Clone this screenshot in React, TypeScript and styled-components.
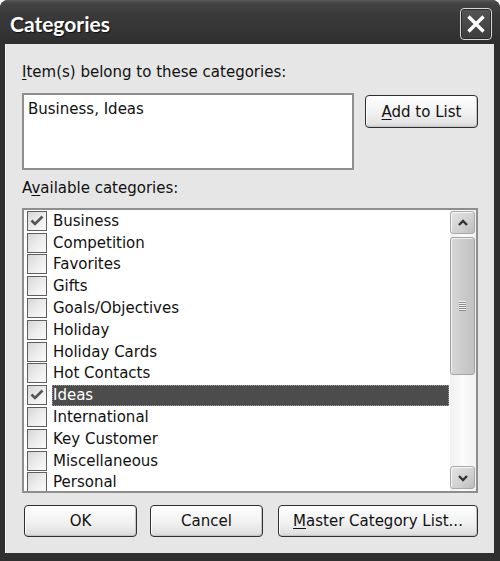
import React from "react";
import styled, { createGlobalStyle } from "styled-components";

const Global = createGlobalStyle`
  html, body { margin: 0; padding: 0; background: #ffffff; }
  body { font-family: "DejaVu Sans", "Liberation Sans", sans-serif; }
  * { box-sizing: border-box; }
`;

const Window = styled.div`
  width: 500px;
  height: 561px;
  display: flex;
  flex-direction: column;
  background: #2f2f2f;
  border-radius: 8px 8px 0 0;
  overflow: hidden;
`;

const TitleBar = styled.div`
  height: 44px;
  flex: none;
  display: flex;
  align-items: flex-start;
  justify-content: space-between;
  padding: 0 8px 0 10px;
  background: linear-gradient(#5a5a5a 0px, #444 3px, #3a3a3a 14px, #353535 30px, #2e2e2e 44px);
`;

const Title = styled.div`
  margin-top: 11px;
  font-family: Lato, "Liberation Sans", sans-serif;
  font-weight: 700;
  font-size: 21px;
  line-height: 26px;
  color: #ffffff;
  text-shadow: 1px 1px 1px #111;
`;

const CloseButton = styled.div`
  margin-top: 8px;
  width: 32px;
  height: 32px;
  border: 1.5px solid #d8d8d8;
  border-radius: 4px;
  background: linear-gradient(#555, #3c3c3c);
  box-shadow: inset 0 0 0 1px #2a2a2a;
  display: flex;
  align-items: center;
  justify-content: center;
`;

const Body = styled.div`
  flex: 1;
  margin: 0 6px 8px 5px;
  background: #e6e6e6;
  padding: 19px 16px 16px 17px;
  display: flex;
  flex-direction: column;
  color: #111;
  font-size: 15px;
  line-height: 18px;
  box-shadow: inset 1px 0 0 #f4f4f4;
`;

const Label = styled.div<{ $gap: number }>`
  margin-bottom: ${(p) => p.$gap}px;
`;

const Mn = styled.span`
  text-decoration: underline;
  text-underline-offset: 2px;
`;

const TopRow = styled.div`
  display: flex;
  align-items: flex-start;
  gap: 11px;
  margin-bottom: 9px;
`;

const TextBox = styled.div`
  width: 332px;
  height: 77px;
  flex: none;
  background: #fff;
  border: 2px solid #8e8e8e;
  padding: 5px 4px;
`;

const PushButton = styled.div<{ $w: number; $ml?: number }>`
  width: ${(p) => p.$w}px;
  flex: none;
  margin-left: ${(p) => p.$ml ?? 0}px;
  height: 32px;
  border: 1.5px solid #2f2f2f;
  border-radius: 4px;
  background: linear-gradient(#ffffff, #f1f1f1 55%, #e2e2e2 90%, #d2d2d2);
  box-shadow: inset 1px 1px 0 #fff, inset -1px -1px 0 #c4c4c4;
  display: flex;
  align-items: center;
  justify-content: center;
  color: #111;
`;

const AddButton = styled(PushButton)`
  margin-top: 2px;
  height: 33px;
`;

const ListBox = styled.div`
  height: 285px;
  background: #fff;
  border: 2px solid #8e8e8e;
  display: flex;
  margin-bottom: 12px;
`;

const Items = styled.div`
  flex: 1;
  min-width: 0;
  overflow: hidden;
  padding: 0 1px 0 3px;
`;

const Row = styled.div`
  height: 21.8px;
  display: flex;
  align-items: center;
  gap: 5px;
`;

const Check = styled.div`
  width: 20px;
  height: 20px;
  flex: none;
  border: 1.5px solid #5e5e5e;
  background: linear-gradient(135deg, #d6d6d6, #ececec 50%, #fbfbfb);
  display: flex;
  align-items: center;
  justify-content: center;
`;

const ItemText = styled.div<{ $sel: boolean }>`
  flex: 1;
  height: 21px;
  padding: 1.5px 1px 0 1px;
  line-height: 18px;
  color: ${(p) => (p.$sel ? "#fff" : "#111")};
  background: ${(p) => (p.$sel ? "#4c4c4c" : "transparent")};
  outline: ${(p) => (p.$sel ? "1px dotted #9a9a9a" : "none")};
  outline-offset: -1px;
  white-space: nowrap;
`;

const ScrollBar = styled.div`
  width: 26px;
  flex: none;
  padding: 1px 1px 2px 0;
  background: linear-gradient(90deg, #f0f0f0, #fbfbfb 50%, #f2f2f2);
  display: flex;
  flex-direction: column;
`;

const ScrollBtn = styled.div`
  height: 23px;
  border: 1px solid #a9a9a9;
  border-radius: 3px;
  background: linear-gradient(135deg, #e4e4e4, #d0d0d0 60%, #bdbdbd);
  box-shadow: inset 1px 1px 0 #f6f6f6;
  display: flex;
  align-items: center;
  justify-content: center;
`;

const Thumb = styled.div`
  margin-top: 3px;
  height: 138px;
  border: 1px solid #a3a3a3;
  border-radius: 3px;
  background: linear-gradient(90deg, #d8d8d8, #cbcbcb 50%, #c2c2c2);
  box-shadow: inset 1px 1px 0 #efefef;
  display: flex;
  align-items: center;
  justify-content: center;
`;

const Spacer = styled.div`
  flex: 1;
`;

const ButtonRow = styled.div`
  display: flex;
  padding-left: 2px;
`;

const items: { name: string; checked?: boolean; selected?: boolean }[] = [
  { name: "Business", checked: true },
  { name: "Competition" },
  { name: "Favorites" },
  { name: "Gifts" },
  { name: "Goals/Objectives" },
  { name: "Holiday" },
  { name: "Holiday Cards" },
  { name: "Hot Contacts" },
  { name: "Ideas", checked: true, selected: true },
  { name: "International" },
  { name: "Key Customer" },
  { name: "Miscellaneous" },
  { name: "Personal" },
];

const CheckMark = () => (
  <svg width="16" height="16" viewBox="0 0 16 16">
    <path d="M2.5 7.5 L6 11 L13.5 3.5" fill="none" stroke="#555" strokeWidth="2.6" />
  </svg>
);

const Chevron = ({ up }: { up: boolean }) => (
  <svg width="12" height="10" viewBox="0 0 12 10">
    <path
      d={up ? "M2 7 L6 3 L10 7" : "M2 3 L6 7 L10 3"}
      fill="none"
      stroke="#333"
      strokeWidth="2.4"
    />
  </svg>
);

const Grip = () => (
  <svg width="9" height="10" viewBox="0 0 9 10">
    {[0, 2, 4, 6, 8].map((y) => (
      <g key={y}>
        <line x1="1" x2="8" y1={y + 0.5} y2={y + 0.5} stroke="#f2f2f2" strokeWidth="1" />
        <line x1="1" x2="8" y1={y + 1.5} y2={y + 1.5} stroke="#8c8c8c" strokeWidth="1" />
      </g>
    ))}
  </svg>
);

export default function App() {
  return (
    <>
      <Global />
      <Window>
        <TitleBar>
          <Title>Categories</Title>
          <CloseButton>
            <svg width="20" height="20" viewBox="0 0 20 20">
              <path d="M2.5 2.5 L17.5 17.5 M17.5 2.5 L2.5 17.5" stroke="#fff" strokeWidth="3.4" />
            </svg>
          </CloseButton>
        </TitleBar>
        <Body>
          <Label $gap={12}>
            <Mn>I</Mn>tem(s) belong to these categories:
          </Label>
          <TopRow>
            <TextBox>Business, Ideas</TextBox>
            <AddButton $w={113}>
              <span>
                <Mn>A</Mn>dd to List
              </span>
            </AddButton>
          </TopRow>
          <Label $gap={11}>
            A<Mn>v</Mn>ailable categories:
          </Label>
          <ListBox>
            <Items>
              {items.map((it) => (
                <Row key={it.name}>
                  <Check>{it.checked && <CheckMark />}</Check>
                  <ItemText $sel={!!it.selected}>{it.name}</ItemText>
                </Row>
              ))}
            </Items>
            <ScrollBar>
              <ScrollBtn>
                <Chevron up />
              </ScrollBtn>
              <Thumb>
                <Grip />
              </Thumb>
              <Spacer />
              <ScrollBtn>
                <Chevron up={false} />
              </ScrollBtn>
            </ScrollBar>
          </ListBox>
          <ButtonRow>
            <PushButton $w={113}>OK</PushButton>
            <PushButton $w={113} $ml={13}>Cancel</PushButton>
            <PushButton $w={200} $ml={15}>
              <span>
                <Mn>M</Mn>aster Category List...
              </span>
            </PushButton>
          </ButtonRow>
        </Body>
      </Window>
    </>
  );
}
